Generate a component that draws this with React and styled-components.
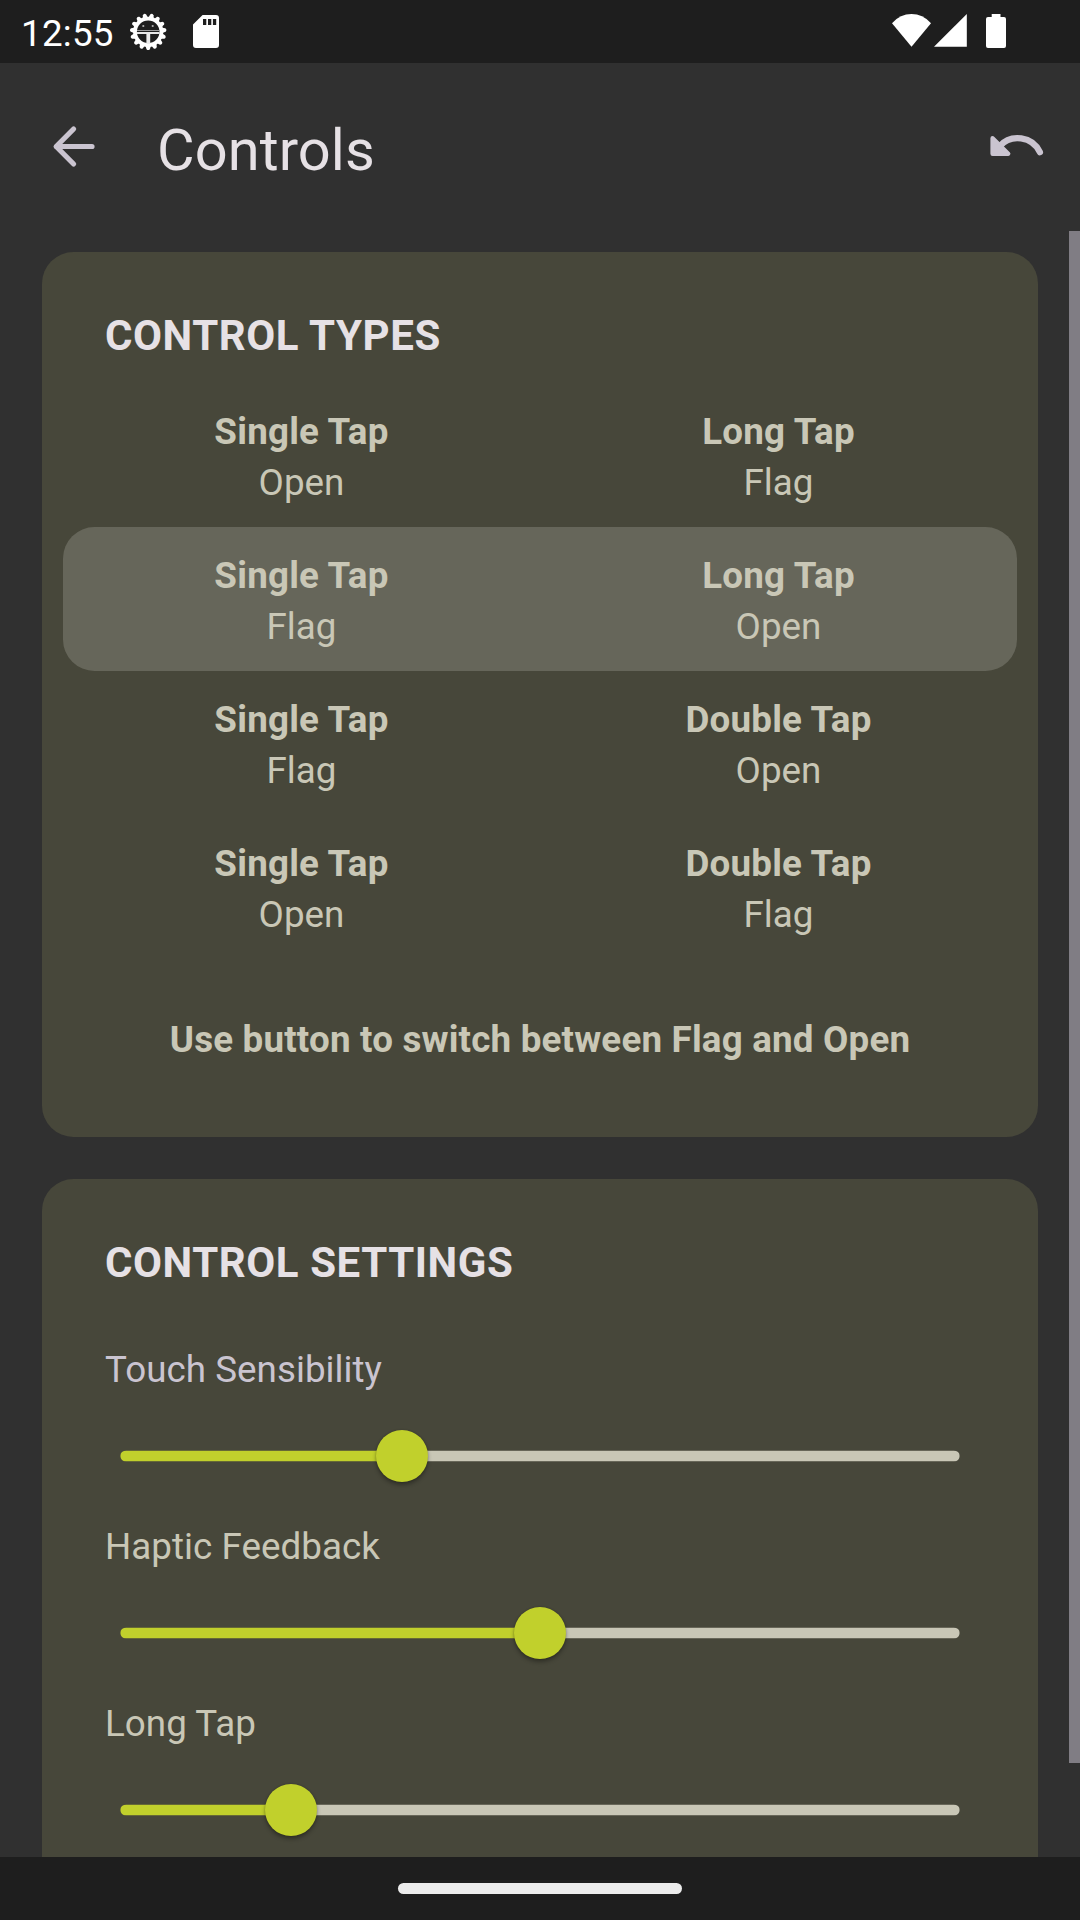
import React from "react";
import styled, { createGlobalStyle } from "styled-components";

const GlobalStyle = createGlobalStyle`
  * { box-sizing: border-box; }
  body { margin: 0; background: #303030; }
`;

const Screen = styled.div`
  width: 1080px;
  height: 1920px;
  display: flex;
  flex-direction: column;
  overflow: hidden;
  background: #303030;
  font-family: Roboto, sans-serif;
`;

const StatusBar = styled.header`
  flex: none;
  height: 63px;
  display: flex;
  justify-content: space-between;
  padding: 0 73px 0 21px;
  background: #1e1e1e;
  color: #fff;
`;

const StatusGroup = styled.div`
  display: flex;
`;

const Clock = styled.span`
  width: 109px;
  padding-top: 12px;
  font-size: 36.75px;
  letter-spacing: 0.25px;
  line-height: 43px;
  white-space: nowrap;
`;

const AppBar = styled.div`
  flex: none;
  height: 168px;
  display: flex;
  align-items: flex-start;
  padding: 52px 29px 0 42px;
`;

const IconButton = styled.button`
  flex: none;
  width: 63px;
  height: 63px;
  padding: 0;
  border: 0;
  background: none;
  color: #cac4d0;
`;

const Title = styled.h1`
  flex: 1;
  margin: 1px 0 0 52px;
  font-size: 57.75px;
  font-weight: 400;
  letter-spacing: 0.1px;
  line-height: 69px;
  color: #e6e1e5;
`;

const Body = styled.main`
  flex: 1;
  min-height: 0;
  display: flex;
  overflow: hidden;
`;

const Content = styled.div`
  flex: 1;
  display: flex;
  flex-direction: column;
  gap: 42px;
  padding: 21px 31px 0 42px;
`;

const ScrollThumb = styled.div`
  flex: none;
  width: 11px;
  height: 1532px;
  background: #807d84;
`;

const Card = styled.section`
  flex: none;
  height: ${(p) => p.$height}px;
  border-radius: 31.5px;
  padding: 59px 21px 0;
  background: #47473a;
  color: #c9c7b6;
  font-size: 36.75px;
  letter-spacing: 0.04px;
`;

const CardTitle = styled.h2`
  margin: 0 42px;
  font-size: 42px;
  font-weight: 700;
  letter-spacing: 0.58px;
  line-height: 50px;
  color: #e6e1e5;
`;

const OptionList = styled.div`
  display: flex;
  flex-direction: column;
  margin-top: 22px;
`;

const OptionRow = styled.div`
  height: 144px;
  display: grid;
  grid-template-columns: 1fr 1fr;
  padding-top: 23px;
  border-radius: 31.5px;
  background: ${(p) => (p.$selected ? "#66665a" : "transparent")};
`;

const Gesture = styled.div`
  display: flex;
  flex-direction: column;
  align-items: center;
  line-height: 51px;
`;

const GestureName = styled.strong`
  font-weight: 700;
  letter-spacing: 0.22px;
`;

const Hint = styled.p`
  margin: 59px 0 0;
  font-weight: 700;
  letter-spacing: 0.19px;
  line-height: 43px;
  text-align: center;
`;

const Setting = styled.div`
  height: 177px;
  padding: 0 42px;
`;

const Settings = styled.div`
  margin-top: 60px;
`;

const SettingLabel = styled.div`
  line-height: 43px;
  color: ${(p) => (p.$muted ? "#cac4d0" : "#c9c7b6")};
`;

const Slider = styled.div`
  position: relative;
  height: 52px;
  margin: 39px 15px 0;
  display: flex;
  align-items: center;
`;

const Track = styled.div`
  flex: 1;
  height: 12px;
  display: flex;
  overflow: hidden;
  border-radius: 6px;
  transform: scale(0.9994, 0.9167);
`;

const TrackPart = styled.div`
  flex: ${(p) => (p.$active ? "none" : 1)};
  background: ${(p) => (p.$active ? "#c1d02c" : "#c9c7b6")};
`;

const Thumb = styled.div`
  position: absolute;
  top: 0;
  width: 52px;
  height: 52px;
  border-radius: 50%;
  background: #c1d02c;
  box-shadow: 0 3px 4px rgba(0, 0, 0, 0.32), 0 0 2px rgba(0, 0, 0, 0.22);
`;

const NavBar = styled.footer`
  flex: none;
  height: 63px;
  display: flex;
  justify-content: center;
  padding-top: 26px;
  background: #1e1e1e;
`;

const NavHandle = styled.div`
  width: 284px;
  height: 11px;
  border-radius: 5.5px;
  background: #ececec;
`;

const teeth = Array.from({ length: 15 }, (_, i) => i * 24);

const GearIcon = () => (
  <svg width="63" height="63" viewBox="130 0 63 63">
    <g fill="#fff">
      {teeth.map((a) => (
        <path key={a} d="M145.3 45L146.5 49.2Q148.2 51 149.9 49.2L151.1 45Z" transform={`rotate(${a} 148.2 31.8)`} />
      ))}
      <circle cx="143.3" cy="26" r="1.1" opacity=".65" />
      <circle cx="152.7" cy="26" r="1.1" opacity=".65" />
    </g>
    <circle cx="148.2" cy="31.8" r="13.2" fill="none" stroke="#fff" strokeWidth="3.8" />
    <path d="M137 30.5H159.5" stroke="#999" strokeWidth="1" />
    <path d="M137 33H159.5" stroke="#fff" strokeWidth="1.8" />
    <path d="M148.3 33V44" stroke="#ececec" strokeWidth="3.8" />
  </svg>
);

const SdCardIcon = () => (
  <svg width="26" height="63" viewBox="193 0 26 63">
    <path
      fill="#fff"
      fillRule="evenodd"
      d="M202.6 15H216Q219 15 219 18V45Q219 48 216 48H196Q193 48 193 45V24.6ZM203 19V25H206.3V19ZM208 19V25H211.3V19ZM212.9 19V25H216.2V19Z"
    />
  </svg>
);

const SignalIcons = () => (
  <svg width="116" height="63" viewBox="891 0 116 63" fill="#fff">
    <path d="M911.5 46.7L892 23.2Q900.3 14.1 911.5 14.1Q922.7 14.1 931 23.2Z" />
    <path d="M966.8 14V46.8H934Z" />
    <path d="M991.7 17V14H1000.5V17H1004Q1006 17 1006 19V46Q1006 48 1004 48H988Q986 48 986 46V19Q986 17 988 17Z" />
  </svg>
);

const BackIcon = () => (
  <svg width="63" height="63" viewBox="42 115 63 63" fill="none" stroke="currentColor" strokeWidth="5.2" strokeLinecap="round" strokeLinejoin="round">
    <path d="M92 146.5H56.3M73.6 129L56.2 146.5L73.6 164" />
  </svg>
);

const UndoIcon = () => (
  <svg width="63" height="63" viewBox="988 115 63 63" stroke="currentColor" strokeLinecap="round" strokeLinejoin="round">
    <path d="M992.6 138.2L1008.2 153.8H992.6Z" fill="currentColor" strokeWidth="4.4" />
    <path d="M999.5 146.3A24.6 24.6 0 0 1 1039.9 152.2" fill="none" strokeWidth="6.3" />
  </svg>
);

const options = [
  [["Single Tap", "Open"], ["Long Tap", "Flag"]],
  [["Single Tap", "Flag"], ["Long Tap", "Open"]],
  [["Single Tap", "Flag"], ["Double Tap", "Open"]],
  [["Single Tap", "Open"], ["Double Tap", "Flag"]],
];

const settings = [
  { label: "Touch Sensibility", value: 1 / 3, muted: true },
  { label: "Haptic Feedback", value: 0.5 },
  { label: "Long Tap", value: 0.2 },
];

// The thumb's centre travels between the rounded ends of the 840px track.
const thumbCentre = (value) => 5.25 + value * 829.5;

export default function App() {
  return (
    <Screen>
      <GlobalStyle />
      <StatusBar>
        <StatusGroup>
          <Clock>12:55</Clock>
          <GearIcon />
          <SdCardIcon />
        </StatusGroup>
        <StatusGroup>
          <SignalIcons />
        </StatusGroup>
      </StatusBar>
      <AppBar>
        <IconButton aria-label="Back">
          <BackIcon />
        </IconButton>
        <Title>Controls</Title>
        <IconButton aria-label="Reset">
          <UndoIcon />
        </IconButton>
      </AppBar>
      <Body>
        <Content>
          <Card $height={885}>
            <CardTitle>CONTROL TYPES</CardTitle>
            <OptionList>
              {options.map((gestures, i) => (
                <OptionRow key={i} $selected={i === 1}>
                  {gestures.map(([name, action]) => (
                    <Gesture key={name}>
                      <GestureName>{name}</GestureName>
                      <span>{action}</span>
                    </Gesture>
                  ))}
                </OptionRow>
              ))}
            </OptionList>
            <Hint>Use button to switch between Flag and Open</Hint>
          </Card>
          <Card $height={760}>
            <CardTitle>CONTROL SETTINGS</CardTitle>
            <Settings>
              {settings.map(({ label, value, muted }) => (
                <Setting key={label}>
                  <SettingLabel $muted={muted}>{label}</SettingLabel>
                  <Slider>
                    <Track>
                      <TrackPart $active style={{ width: thumbCentre(value) }} />
                      <TrackPart />
                    </Track>
                    <Thumb style={{ left: thumbCentre(value) - 26 }} />
                  </Slider>
                </Setting>
              ))}
            </Settings>
          </Card>
        </Content>
        <ScrollThumb />
      </Body>
      <NavBar>
        <NavHandle />
      </NavBar>
    </Screen>
  );
}
